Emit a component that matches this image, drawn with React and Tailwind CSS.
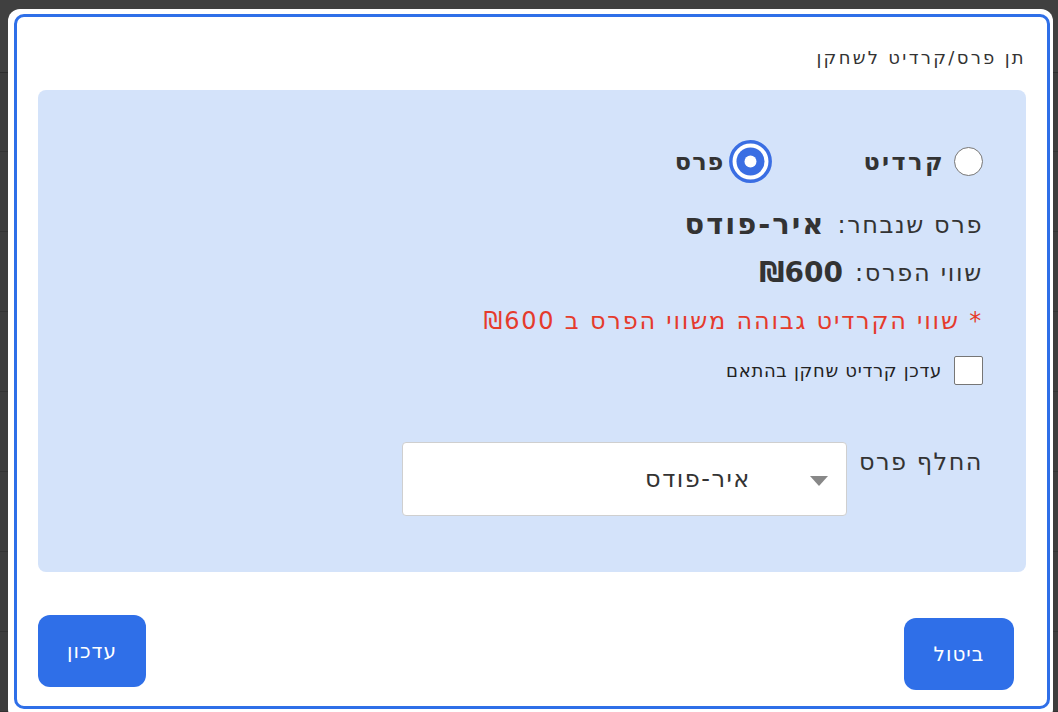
import React, { useState } from "react";

const font = { fontFamily: '"DejaVu Sans", "Liberation Sans", sans-serif' };

// background table that sits behind the modal
const BackgroundTable = () => {
  const rows = [0, 1, 2, 3, 4, 5, 6, 7];
  return (
    <div className="flex h-full w-full flex-col bg-[#3d3d3d]">
      <div className="h-[78px] border-b border-[#2e2e2e] bg-[#404040]" />
      {rows.map((r) => (
        <div
          key={r}
          className="grid h-[86px] grid-cols-[45px_387px_388px_1fr] border-b border-[#333]"
        >
          <div className="border-r border-[#2f2f2f]" />
          <div className="border-r border-[#2f2f2f]" />
          <div className="border-r border-[#2f2f2f]" />
          <div />
        </div>
      ))}
    </div>
  );
};

const RadioChecked = () => (
  <svg width="43" height="43" viewBox="0 0 43 43">
    <circle cx="21.5" cy="21.5" r="19.7" fill="#fff" stroke="#3a6ee3" strokeWidth="3.5" />
    <circle cx="21.5" cy="21.5" r="14" fill="#3a6ee3" />
    <circle cx="21.5" cy="21.5" r="6" fill="#fff" />
  </svg>
);

const RadioEmpty = () => (
  <span className="block h-[29px] w-[29px] rounded-full border border-[#767676] bg-white" />
);

export default function App() {
  const [type, setType] = useState("prize");
  const [sync, setSync] = useState(false);

  return (
    <div className="relative h-[712px] w-[1058px] overflow-hidden" style={font}>
      <BackgroundTable />

      {/* Modal */}
      <div className="absolute left-[8px] top-[9px] h-[712px] w-[1045px] rounded-[12px] bg-white pl-[6px] pr-[3px] pt-[5px]">
        <div
          dir="rtl"
          className="flex h-[695px] flex-col rounded-[10px] border-[3px] border-[#2f6fe8] px-[21px]"
        >
          <div className="pt-[28px] text-[18px] leading-[26px] tracking-[2.3px] text-[#333]">
            תן פרס/קרדיט לשחקן
          </div>

          {/* Panel */}
          <div className="mt-[19px] rounded-[8px] bg-[#d4e3fa] pb-[56px] pl-[43px] pr-[43px] pt-[50px] text-[#333]">
            {/* radios */}
            <div className="flex h-[43px] items-center">
              <button
                onClick={() => setType("credit")}
                className="flex items-center gap-[9px]"
              >
                {type === "credit" ? <RadioChecked /> : <RadioEmpty />}
                <span className="text-[24px] font-bold leading-[32px] tracking-[2.4px] text-[#333]">
                  קרדיט
                </span>
              </button>
              <button
                onClick={() => setType("prize")}
                className="mr-[91px] flex items-center gap-[5px]"
              >
                {type === "prize" ? <RadioChecked /> : <RadioEmpty />}
                <span className="text-[24px] font-bold leading-[32px] tracking-[1px] text-[#333]">
                  פרס
                </span>
              </button>
            </div>

            <div className="mt-[18px] flex h-[48px] items-center gap-[12px]">
              <span className="text-[24px] tracking-[1.6px]">פרס שנבחר:</span>
              <span className="text-[29px] font-bold tracking-[2px]">איר-פודס</span>
            </div>

            <div className="flex h-[48px] items-center gap-[12px]">
              <span className="text-[24px] tracking-[1.7px]">שווי הפרס:</span>
              <span className="text-[28px] font-bold">₪600</span>
            </div>

            <div className="flex h-[48px] items-center text-[24px] tracking-[1.8px] text-[#e53b2c]">
              * שווי הקרדיט גבוהה משווי הפרס ב ₪600
            </div>

            <label className="mt-[11px] flex h-[28px] items-center gap-[12px]">
              <span
                onClick={() => setSync(!sync)}
                className="block h-[29px] w-[29px] rounded-[2px] border border-[#767676] bg-white"
              />
              <span className="text-[18px] tracking-[0.7px] text-[#222]">עדכן קרדיט שחקן בהתאם</span>
            </label>

            <div className="mt-[58px] flex items-start gap-[12px]">
              <span className="pt-[2px] text-[24px] leading-[36px] tracking-[1.5px]">החלף פרס</span>
              <div className="flex h-[74px] w-[445px] items-center gap-[59px] rounded-[4px] border border-[#cfcfcf] bg-white pr-[18px]">
                <svg width="18" height="10" viewBox="0 0 18 10" className="mt-[4px]">
                  <path d="M0 0h18L9 10z" fill="#888" />
                </svg>
                <span className="text-[24px] tracking-[1.5px] text-[#333]">איר-פודס</span>
              </div>
            </div>
          </div>

          {/* Footer buttons */}
          <div className="mt-[43px] flex items-start justify-between">
            <button className="mr-[12px] mt-[3px] h-[72px] w-[110px] rounded-[12px] bg-[#2f6fe8] text-[20px] tracking-[1px] text-white">
              ביטול
            </button>
            <button className="h-[72px] w-[108px] rounded-[12px] bg-[#2f6fe8] text-[20px] tracking-[1px] text-white">
              עדכון
            </button>
          </div>
        </div>
      </div>
    </div>
  );
}
